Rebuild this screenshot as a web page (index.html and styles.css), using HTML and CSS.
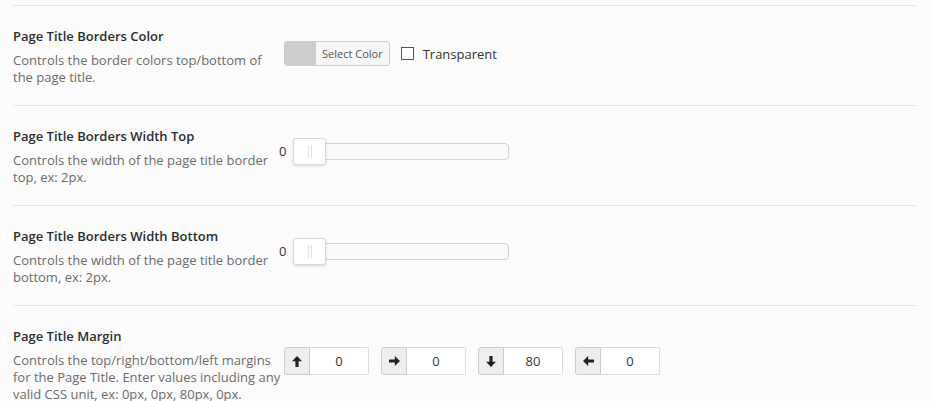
FILE: index.html
```html
<!DOCTYPE html>
<html lang="en">
<head>
    <meta charset="UTF-8">
    <title>Page Title Options</title>
    <link rel="stylesheet" href="styles.css">
</head>
<body>
    <div class="options">
        <div class="option">
            <div class="info">
                <h3>Page Title Borders Color</h3>
                <p>Controls the border colors top/bottom of the page title.</p>
            </div>
            <div class="field">
                <div class="color-field">
                    <button class="color-button">
                        <span class="swatch"></span>
                        <span class="color-label">Select Color</span>
                    </button>
                    <label class="transparent">
                        <input type="checkbox">
                        <span>Transparent</span>
                    </label>
                </div>
            </div>
        </div>

        <div class="option">
            <div class="info">
                <h3>Page Title Borders Width Top</h3>
                <p>Controls the width of the page title border top, ex: 2px.</p>
            </div>
            <div class="field">
                <div class="slider-field">
                    <span class="slider-value">0</span>
                    <div class="slider">
                        <div class="handle"><span></span><span></span></div>
                    </div>
                </div>
            </div>
        </div>

        <div class="option">
            <div class="info">
                <h3>Page Title Borders Width Bottom</h3>
                <p>Controls the width of the page title border bottom, ex: 2px.</p>
            </div>
            <div class="field">
                <div class="slider-field">
                    <span class="slider-value">0</span>
                    <div class="slider">
                        <div class="handle"><span></span><span></span></div>
                    </div>
                </div>
            </div>
        </div>

        <div class="option">
            <div class="info">
                <h3>Page Title Margin</h3>
                <p>Controls the top/right/bottom/left margins for the Page Title. Enter values including any valid CSS unit, ex: 0px, 0px, 80px, 0px.</p>
            </div>
            <div class="field">
                <div class="spacing-field">
                    <div class="input-group">
                        <span class="addon">
                            <svg width="10" height="11" viewBox="0 0 10 11"><path d="M5 0 L10 5.2 L6.6 5.2 L6.6 11 L3.4 11 L3.4 5.2 L0 5.2 Z" fill="#222"/></svg>
                        </span>
                        <input type="text" value="0">
                    </div>
                    <div class="input-group">
                        <span class="addon">
                            <svg width="11" height="10" viewBox="0 0 11 10"><path d="M11 5 L5.8 10 L5.8 6.6 L0 6.6 L0 3.4 L5.8 3.4 L5.8 0 Z" fill="#222"/></svg>
                        </span>
                        <input type="text" value="0">
                    </div>
                    <div class="input-group">
                        <span class="addon">
                            <svg width="10" height="11" viewBox="0 0 10 11"><path d="M5 11 L10 5.8 L6.6 5.8 L6.6 0 L3.4 0 L3.4 5.8 L0 5.8 Z" fill="#222"/></svg>
                        </span>
                        <input type="text" value="80">
                    </div>
                    <div class="input-group">
                        <span class="addon">
                            <svg width="11" height="10" viewBox="0 0 11 10"><path d="M0 5 L5.2 10 L5.2 6.6 L11 6.6 L11 3.4 L5.2 3.4 L5.2 0 Z" fill="#222"/></svg>
                        </span>
                        <input type="text" value="0">
                    </div>
                </div>
            </div>
        </div>
    </div>
</body>
</html>
```

FILE: styles.css
```css
body {
    margin: 0;
    background-color: #fcfcfc;
    font-family: "Open Sans", "Noto Sans", sans-serif;
    font-size: 13px;
    color: #333;
}
.options {
    margin: 5px 16px 0 13px;
}
.option {
    display: flex;
    border-top: 1px solid #e5e5e5;
    padding: 20px 0 19px;
}
.info {
    flex: 0 0 268px;
}
.info h3 {
    margin: 0;
    font-size: 13px;
    font-weight: 600;
    line-height: 20px;
    color: #2a2e33;
}
.info p {
    margin: 6px 0 0;
    line-height: 17px;
    color: #6b6b6b;
}
.field {
    flex: 1;
}

/* color picker */
.color-field {
    display: flex;
    align-items: center;
    margin: 15px 0 0 3px;
}
.color-button {
    display: flex;
    height: 25px;
    padding: 0;
    border: 1px solid #ccc;
    border-radius: 3px;
    background-color: #f7f7f7;
    overflow: hidden;
    cursor: pointer;
}
.swatch {
    width: 31px;
    background-color: #ccc;
}
.color-label {
    padding: 0 6px;
    font-family: "Open Sans", sans-serif;
    font-size: 11px;
    line-height: 23px;
    color: #555;
}
.transparent {
    display: flex;
    align-items: center;
    margin-left: 11px;
}
.transparent input {
    width: 13px;
    height: 13px;
    margin: 0 9px 0 0;
    appearance: none;
    border: 1px solid #555;
    background-color: #fff;
}

/* slider */
.slider-field {
    display: flex;
    align-items: center;
    margin: 17px 0 0 -2px;
}
.slider-value {
    width: 14px;
    line-height: 17px;
}
.slider {
    position: relative;
    width: 214px;
    height: 15px;
    border: 1px solid #d3d3d3;
    border-radius: 4px;
    background-color: #fafafa;
}
.handle {
    position: absolute;
    left: -1px;
    top: -6px;
    width: 31px;
    height: 25px;
    display: flex;
    justify-content: center;
    align-items: center;
    gap: 2px;
    border: 1px solid #d9d9d9;
    border-radius: 3px;
    background-color: #fff;
    box-shadow: 0 1px 3px rgba(0, 0, 0, 0.15);
}
.handle span {
    width: 1px;
    height: 13px;
    background-color: #e2e2e2;
}

/* spacing inputs */
.spacing-field {
    display: flex;
    gap: 12px;
    margin: 21px 0 0 3px;
}
.input-group {
    display: flex;
    height: 28px;
}
.addon {
    display: flex;
    align-items: center;
    justify-content: center;
    width: 24px;
    border: 1px solid #ccc;
    border-radius: 3px 0 0 3px;
    background-color: #eee;
}
.input-group input {
    width: 58px;
    padding: 0;
    border: 1px solid #ddd;
    border-left: none;
    border-radius: 0 2px 2px 0;
    background-color: #fff;
    font-family: "Open Sans", sans-serif;
    font-size: 13px;
    color: #333;
    text-align: center;
}
```
